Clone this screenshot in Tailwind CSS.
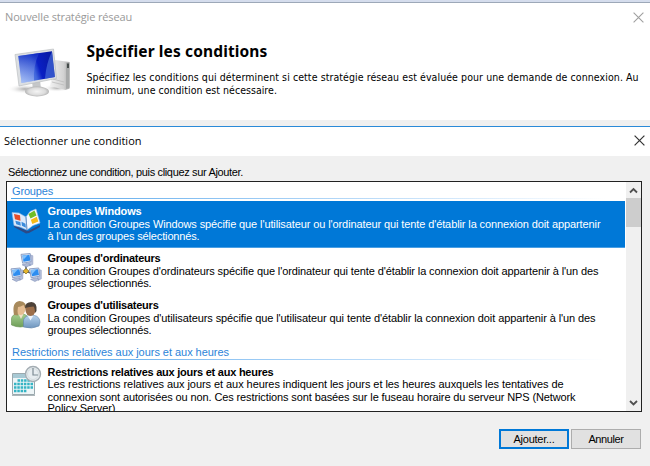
<!DOCTYPE html>
<html lang="fr">
<head>
<meta charset="utf-8">
<title>Nouvelle stratégie réseau</title>
<script src="https://cdn.jsdelivr.net/npm/@tailwindcss/browser@4"></script>
</head>
<body class="w-[650px] h-[466px] overflow-hidden bg-[#f0f0f0] text-black whitespace-nowrap font-['Liberation_Sans',Arial,sans-serif] text-[11px] leading-[12.5px]">
<div class="flex flex-col h-[466px]">
  <!-- Wizard window -->
  <div class="h-[3px] shrink-0 bg-[#d5dded] border-b border-[#9da8b8]"></div>
  <section class="h-[117px] shrink-0 bg-white">
    <div class="flex justify-between items-center h-[28px] pl-[5px] pr-[6px] text-[#999] font-['Open_Sans',sans-serif]">
      <h1 class="tracking-[-0.14px]">Nouvelle stratégie réseau</h1>
      <svg class="w-[11px] h-[11px]" viewBox="0 0 11 11" fill="none" stroke="#a0a0a0" stroke-width="1.1"><path d="M.6.6l9.8 9.8M10.4.6L.6 10.4"/></svg>
    </div>
    <div class="flex">
      <svg class="w-[78px] h-[70px] shrink-0" viewBox="0 31 78 70">
        <defs>
          <linearGradient id="scr" x1="0" y1=".6" x2="1" y2=".3"><stop offset="0" stop-color="#8daaf0"/><stop offset=".4" stop-color="#3f65dc"/><stop offset=".55" stop-color="#0a1fc4"/><stop offset="1" stop-color="#0718a0"/></linearGradient>
          <linearGradient id="scrv" x1="0" y1="0" x2="0" y2="1"><stop offset="0" stop-color="#0f2cc4"/><stop offset="1" stop-color="#b9d0fa" stop-opacity=".7"/></linearGradient>
          <linearGradient id="box"><stop offset="0" stop-color="#f1f1f1"/><stop offset=".7" stop-color="#d2d2d2"/><stop offset="1" stop-color="#a9a9a9"/></linearGradient>
          <radialGradient id="base"><stop offset="0" stop-color="#f4f4f4"/><stop offset=".7" stop-color="#dcdcdc"/><stop offset="1" stop-color="#b5b5b5"/></radialGradient>
          <radialGradient id="shadow"><stop offset="0" stop-color="#aaa"/><stop offset="1" stop-color="#fff" stop-opacity="0"/></radialGradient>
        </defs>
        <ellipse cx="25" cy="89" rx="18" ry="5" fill="url(#shadow)"/>
        <ellipse cx="57" cy="88" rx="14" ry="4" fill="url(#shadow)"/>
        <path d="M55 60l14.500 2v26.500l-4 1.500L50 86z" fill="url(#box)"/>
        <path d="M66 63l3.500-.5v25L66 89z" fill="#a7a9a9"/><path d="M67 63.500h2V68h-2z" fill="#444b49"/>
        <path d="M53 79l11 3M52 82l12 3" stroke="#b7b7b7" stroke-width=".7"/>
        <path d="M32 81l8-1 1 9-8 1z" fill="#c5c7c9"/>
        <ellipse cx="37" cy="91.500" rx="12" ry="5" fill="url(#base)"/>
        <path d="M15 54.500L53.500 49l3 29.500L19 86z" fill="#dcdfe2" stroke="#b6b9bb" stroke-width=".6"/>
        <path d="M18.300 56L52 51.300l2.900 25.700L21.500 83z" fill="url(#scr)"/>
        <path d="M18.300 56L39 53.200Q33 66 34 81L21.500 83z" fill="url(#scrv)" opacity=".8"/>
        <path d="M52 51.300l2.900 25.700-10 1.800Q46 64 52 51.300z" fill="#4f78de" opacity=".6"/>
      </svg>
      <div class="pl-[8.500px] pt-[10px]">
        <h2 class="font-bold text-[15.5px] leading-[20px] tracking-[0.13px] font-['Noto_Sans',sans-serif]">Spécifier les conditions</h2>
        <div class="mt-[10px] font-['DejaVu_Sans_Condensed','DejaVu_Sans',sans-serif] [font-stretch:condensed] text-[10.5px] leading-[12.500px]">
          <p class="tracking-[0.082px]">Spécifiez les conditions qui déterminent si cette stratégie réseau est évaluée pour une demande de connexion. Au</p>
          <p class="tracking-[0.03px]">minimum, une condition est nécessaire.</p>
        </div>
      </div>
    </div>
  </section>
  <div class="h-[6px] shrink-0"></div>

  <!-- Condition picker dialog -->
  <section class="flex flex-col flex-1 border-t border-[#2b8ad8]">
    <div class="flex justify-between items-center h-[29px] shrink-0 bg-white pl-[4px] pr-[5px] font-['Open_Sans',sans-serif]">
      <h2>Sélectionner une condition</h2>
      <svg class="w-[11px] h-[11px] -mt-[2px]" viewBox="0 0 11 11" fill="none" stroke="#333" stroke-width="1.200"><path d="M.6.6l9.800 9.800M10.400.6L.6 10.400"/></svg>
    </div>
    <p class="h-[25px] shrink-0 pl-[8px] pt-[10px] tracking-[-0.343px]">Sélectionnez une condition, puis cliquez sur Ajouter.</p>

    <div class="flex w-[636px] h-[231px] shrink-0 ml-[6px] border border-[#222] bg-white overflow-hidden">
      <div class="w-[619px] overflow-hidden">
        <div class="h-[16px] pl-[5px] pt-[3px] text-[#2c84d8]"><span class="tracking-[-0.17px]">Groupes</span></div>
        <div class="h-px ml-[4px] mr-[20px] bg-linear-to-r from-[#4aa3ea] to-white"></div>
        <div class="h-[2px]"></div>

        <div class="flex h-[47px] w-[618px] bg-[#0078d7] text-white border-b border-[#4a9fe4]">
          <svg class="w-[32px] h-[32px] mt-[4px] ml-[3px] shrink-0" viewBox="0 0 32 32">
            <path d="M4 20l11 5 3 1 12-6v2l-11 6-3 .5L4 22z" fill="#2c4a86"/>
            <path d="M2 7.500l7 .5 7 4 1 13-7-3-6-1.500z" fill="#dceafb" stroke="#8fb3e0" stroke-width=".6"/>
            <path d="M16 12L20 6.500l6-2.500 4 14-7 2.500-6 4.500z" fill="#f7faff" stroke="#9dbde5" stroke-width=".6"/>
            <path d="M4 9l6 1.200.5 5.500L5 14.300z" fill="#e64b27"/>
            <path d="M5.300 15.800l5 1.200.5 3.800-4.500-1.500zM11.500 16.800l4 2 .4 4-4-2z" fill="#3a8bdb"/>
            <path d="M18.500 9l6-3.500 2 5-6 3z" fill="#70bd27"/>
            <path d="M20.800 14.700l6-3 1.500 4.800-6 2.500z" fill="#f7ba18"/>
            <path d="M16 12l1 13" stroke="#6b93c7"/>
          </svg>
          <div class="pt-[4px] pl-[5.500px]">
            <h3 class="font-bold tracking-[-0.165px]">Groupes Windows</h3>
            <p class="tracking-[-0.107px]">La condition Groupes Windows spécifie que l'utilisateur ou l'ordinateur qui tente d'établir la connexion doit appartenir</p>
            <p class="tracking-[-0.15px]">à l'un des groupes sélectionnés.</p>
          </div>
        </div>

        <div class="flex h-[47px]">
          <svg class="w-[32px] h-[36px] mt-[2px] ml-[3px] shrink-0" viewBox="0 0 32 36">
            <defs>
              <g id="pc">
                <path d="M0 .8L8.500 0l1.300 7.500L1.500 9z" fill="#d8e1f1" stroke="#8295bd" stroke-width=".8"/>
                <path d="M1.300 1.800l6.500-.7 1 5.400-6.500 1.100z" fill="#2d8df0"/><path d="M1.300 1.800l5-.5-4 4.500z" fill="#7fc0fb"/>
                <path d="M9 1.500l2 .5v8l-3 1.500-1-3 2.500-1z" fill="#b3bfdb" stroke="#8291b8" stroke-width=".4"/>
                <path d="M1 10.500l5-1.500 3 1.500-4 2z" fill="#aeb9d5" stroke="#7889b4" stroke-width=".5"/>
              </g>
            </defs>
            <path d="M16 15v6M8 25l8-4 9 4" fill="none" stroke="#585f6b" stroke-width="1.500"/>
            <path d="M13 21l3-2.500 3 2.500-3 3z" fill="#e6b62d" stroke="#7c6726" stroke-width=".7"/>
            <use href="#pc" transform="translate(11 3.500) scale(1.080)"/><use href="#pc" transform="translate(1 18) scale(1.080)"/><use href="#pc" transform="translate(19.500 18) scale(1.080)"/>
          </svg>
          <div class="pt-[4px] pl-[5.500px]">
            <h3 class="font-bold tracking-[-0.245px]">Groupes d'ordinateurs</h3>
            <p class="tracking-[-0.111px]">La condition Groupes d'ordinateurs spécifie que l'ordinateur qui tente d'établir la connexion doit appartenir à l'un des</p>
            <p class="tracking-[-0.144px]">groupes sélectionnés.</p>
          </div>
        </div>

        <div class="flex h-[47px]">
          <svg class="w-[32px] h-[34px] mt-[3px] ml-[3px] shrink-0" viewBox="0 0 32 34">
            <defs>
              <linearGradient id="green" x2="0" y2="1"><stop offset="0" stop-color="#a5cd8f"/><stop offset="1" stop-color="#6f9f59"/></linearGradient>
              <linearGradient id="blue" x2="0" y2="1"><stop offset="0" stop-color="#b7d3ee"/><stop offset="1" stop-color="#6e95bd"/></linearGradient>
            </defs>
            <path d="M1.500 27V21q0-4 5-5h7q5 1.500 5 6v5q-8 4-17 0z" fill="url(#green)" stroke="#648e50" stroke-width=".6"/>
            <path d="M8 15l3 6 3-6z" fill="#f2e1c7"/>
            <ellipse cx="10.500" cy="11" rx="5" ry="6" fill="#e5bd92"/>
            <path d="M4 17Q1.500 4 9.500 3q8 .5 7 10l-3-6q-3 2-5.500 2-1 4 0 8.500z" fill="#a88a5c"/>
            <path d="M13.500 29v-6q0-4 5-5.500h6q5 1 5.500 6.500l-1 4q-7 3.500-15.500 1z" fill="url(#blue)" stroke="#6284aa" stroke-width=".6"/>
            <path d="M17.500 17.500l3 5 3-5z" fill="#eef5fc"/>
            <ellipse cx="20.500" cy="12" rx="5" ry="6" fill="#9c6f4b"/>
            <path d="M15 10q0-6 6.500-6 6 .5 5 9l-1.500 2q0-5-1.500-6.500-4 0-8.500 1.500z" fill="#4d4239"/>
          </svg>
          <div class="pt-[4px] pl-[5.500px]">
            <h3 class="font-bold tracking-[-0.241px]">Groupes d'utilisateurs</h3>
            <p class="tracking-[-0.093px]">La condition Groupes d'utilisateurs spécifie que l'utilisateur qui tente d'établir la connexion doit appartenir à l'un des</p>
            <p class="tracking-[-0.144px]">groupes sélectionnés.</p>
          </div>
        </div>

        <div class="h-[17px] pl-[5px] pt-[4px] text-[#2c84d8]"><span class="tracking-[-0.041px]">Restrictions relatives aux jours et aux heures</span></div>
        <div class="h-px ml-[4px] mr-[20px] bg-linear-to-r from-[#4aa3ea] to-white"></div>
        <div class="h-[2px]"></div>

        <div class="flex h-[60px]">
          <svg class="w-[34px] h-[36px] mt-[2px] ml-[3px] shrink-0" viewBox="0 0 34 36">
            <path d="M2.500 9.500h22v21h-22z" fill="#eef5f7" stroke="#9ba9ae"/>
            <path d="M3 10h21v4H3z" fill="#a8c9d4"/>
            <path d="M7.500 16.500h15.500M4 20h19M4 23.500h19M4 27h13" stroke="#35b4c4" stroke-width="2.400" stroke-dasharray="2.500 .8"/>
            <path d="M2 31.500h23" stroke="#adb6ba"/>
            <circle cx="23" cy="10" r="7.500" fill="#e7edf0" stroke="#a4adb3" stroke-width="1.400"/>
            <circle cx="23" cy="10" r="5.500" fill="none" stroke="#c7d0d4" stroke-width=".6"/>
            <path d="M23 4v7h5" fill="none" stroke="#7d8b94" stroke-width="1.200"/>
          </svg>
          <div class="pt-[3.500px] pl-[3.500px]">
            <h3 class="font-bold tracking-[-0.244px]">Restrictions relatives aux jours et aux heures</h3>
            <p class="tracking-[-0.061px]">Les restrictions relatives aux jours et aux heures indiquent les jours et les heures auxquels les tentatives de</p>
            <p class="tracking-[-0.11px]">connexion sont autorisées ou non. Ces restrictions sont basées sur le fuseau horaire du serveur NPS (Network</p>
            <p class="tracking-[-0.033px] -mt-[1px]">Policy Server)</p>
          </div>
        </div>
      </div>

      <div class="flex flex-col w-[15px] bg-[#f0f0f0]">
        <svg class="w-[15px] h-[16px]" viewBox="0 0 15 16" fill="none" stroke="#505050" stroke-width="1.800"><path d="M4 10.500l3.500-3.500 3.500 3.500"/></svg>
        <div class="h-[29px] bg-[#cdcdcd]"></div>
        <div class="flex-1"></div>
        <svg class="w-[15px] h-[16px]" viewBox="0 0 15 16" fill="none" stroke="#505050" stroke-width="1.800"><path d="M4 6l3.500 3.500L11 6"/></svg>
      </div>
    </div>

    <div class="flex justify-end gap-[2px] pt-[17px] pr-[9px]">
      <button class="w-[70px] h-[20px] bg-[#e1e1e1] border-2 border-[#0078d7] tracking-[-0.24px] leading-[16px]">Ajouter...</button>
      <button class="w-[70px] h-[20px] bg-[#e1e1e1] border border-[#adadad] tracking-[-0.4px] leading-[18px]">Annuler</button>
    </div>
  </section>
</div>
</body>
</html>
